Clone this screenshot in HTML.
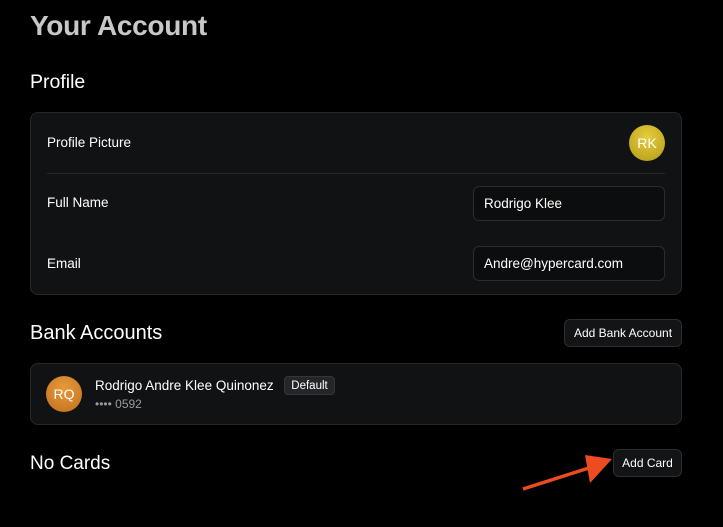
<!DOCTYPE html>
<html><head><style>
*{margin:0;padding:0;box-sizing:border-box}
body{width:723px;height:527px;background:#000;font-family:"Liberation Sans",sans-serif;color:#fff;position:relative;overflow:hidden}
.a{position:absolute}
.card{background:#111214;border:1px solid #26282b;border-radius:8px}
.inp{background:#0c0d0f;border:1px solid #2a2c30;border-radius:6px;font-size:13.5px;padding:0 10px;display:flex;align-items:center}
.btn{background:#131416;border:1px solid #2c2e32;border-radius:6px;font-size:12px;display:flex;align-items:center;justify-content:center}
.lbl{font-size:13.5px}
.av{border-radius:50%;display:flex;align-items:center;justify-content:center;font-size:14px}
</style></head><body>
<div class="a" style="left:30px;top:10px;font-size:28px;font-weight:bold;color:#c8c8c8;letter-spacing:-0.3px">Your Account</div>
<div class="a" style="left:30px;top:71px;font-size:19.5px">Profile</div>
<div class="a card" style="left:30px;top:112px;width:652px;height:183px"></div>
<div class="a lbl" style="left:47px;top:135px">Profile Picture</div>
<div class="a av" style="left:629px;top:125px;width:36px;height:36px;background:radial-gradient(circle at 50% 35%,#e6cd3c,#b39a18)">RK</div>
<div class="a" style="left:47px;top:173px;width:618px;height:1px;background:#26282b"></div>
<div class="a lbl" style="left:47px;top:195px">Full Name</div>
<div class="a inp" style="left:473px;top:186px;width:192px;height:35px">Rodrigo Klee</div>
<div class="a lbl" style="left:47px;top:256px">Email</div>
<div class="a inp" style="left:473px;top:246px;width:192px;height:35px">Andre@hypercard.com</div>
<div class="a" style="left:30px;top:322px;font-size:20px">Bank Accounts</div>
<div class="a btn" style="left:564px;top:319px;width:118px;height:28px">Add Bank Account</div>
<div class="a card" style="left:30px;top:363px;width:652px;height:62px"></div>
<div class="a av" style="left:46px;top:376px;width:36px;height:36px;background:radial-gradient(circle at 50% 35%,#e89a3a,#c06f1c)">RQ</div>
<div class="a" style="left:95px;top:378px;font-size:13.5px">Rodrigo Andre Klee Quinonez</div>
<div class="a" style="left:284px;top:376px;width:51px;height:19px;background:#24262a;border:1px solid #33363a;border-radius:4px;font-size:11.5px;display:flex;align-items:center;justify-content:center">Default</div>
<div class="a" style="left:95px;top:397px;font-size:12px;color:#9a9a9a">•••• 0592</div>
<div class="a" style="left:30px;top:453px;font-size:19px">No Cards</div>
<div class="a btn" style="left:613px;top:449px;width:69px;height:28px">Add Card</div>
<svg class="a" style="left:0;top:0" width="723" height="527"><line x1="523" y1="489" x2="592" y2="467" stroke="#ef4b21" stroke-width="3.5"/><polygon points="612,459 585,455 590,483" fill="#ef4b21"/></svg>
</body></html>
